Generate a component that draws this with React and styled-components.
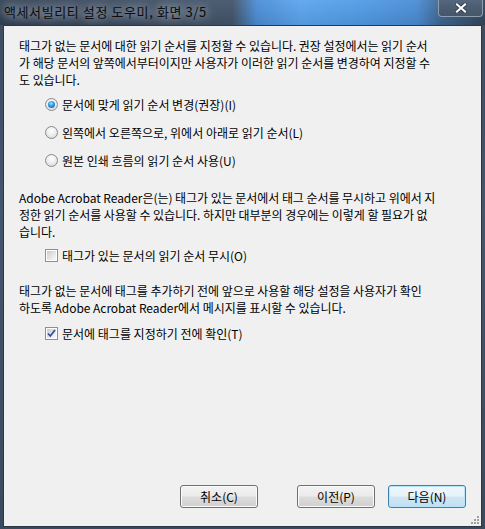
import styled, { createGlobalStyle } from "styled-components";

const GlobalStyle = createGlobalStyle`
  html, body {
    margin: 0;
    padding: 0;
    background: #fff;
  }
  body {
    font-family: "Noto Sans CJK KR", "Noto Sans", sans-serif;
    font-size: 12px;
    color: #000;
  }
`;

const Window = styled.div`
  width: 485px;
  height: 529px;
  display: flex;
  flex-direction: column;
  background: linear-gradient(180deg, #3c4d62 0%, #44566c 40%, #3a4a5e 100%);
  box-sizing: border-box;
  padding: 0 3px 2px 3px;
`;

const TitleBar = styled.div`
  height: 25px;
  margin: 0 -3px;
  display: flex;
  align-items: flex-start;
  justify-content: space-between;
  background:
    linear-gradient(180deg, rgba(255, 255, 255, 0.06) 0%, rgba(0, 0, 0, 0.08) 100%),
    linear-gradient(90deg, #2f3f53 0%, #3b4b60 30%, #43556b 48%, #4b8ed6 53%, #5ba5ee 62%, #4f9be6 75%, #4a8cd4 86%, #3e6690 91%, #33465c 100%);
`;

const Title = styled.span`
  padding: 4px 0 0 4px;
  font-size: 13px;
  line-height: 16px;
  letter-spacing: 0.6px;
  color: #0c0c0c;
  text-shadow: 0 0 10px rgba(230, 236, 244, 0.85), 0 0 14px rgba(230, 236, 244, 0.6);
`;

const CloseButton = styled.div`
  width: 45px;
  height: 17px;
  margin-right: 2px;
  box-sizing: border-box;
  border: 1px solid #8e9db0;
  border-top: none;
  border-radius: 0 0 4px 4px;
  background: linear-gradient(180deg, #55677d 0%, #4c5d72 50%, #45556a 100%);
  display: flex;
  align-items: center;
  justify-content: center;
`;

const Client = styled.div`
  flex: 1;
  position: relative;
  display: flex;
  flex-direction: column;
  background: #f0f0f0;
  border: 1px solid #2b3646;
  padding: 11px 15px 18px 15px;
`;

const Para = styled.p`
  margin: ${({ $top }) => $top || 0}px 0 0 0;
  line-height: 17px;
  white-space: nowrap;
  letter-spacing: -0.05px;
`;

const Option = styled.label`
  display: flex;
  align-items: center;
  gap: 4px;
  height: 28px;
  margin: ${({ $top }) => $top || 0}px 0 0 26px;
  line-height: 17px;
`;

const Radio = styled.span`
  width: 13px;
  height: 13px;
  box-sizing: border-box;
  border-radius: 50%;
  border: 1px solid #8a8a8a;
  background: radial-gradient(circle at 50% 35%, #ffffff 0%, #eeeeee 45%, #d2d2d2 100%);
  display: flex;
  align-items: center;
  justify-content: center;
  &::after {
    content: "";
    display: ${({ $checked }) => ($checked ? "block" : "none")};
    width: 7px;
    height: 7px;
    border-radius: 50%;
    background: radial-gradient(circle at 45% 35%, #9fe0ff 0%, #2a9ae6 45%, #114f86 100%);
  }
`;

const Check = styled.span`
  width: 13px;
  height: 13px;
  box-sizing: border-box;
  border: 1px solid #8e8f8f;
  background: #fff;
  padding: 1px;
  display: flex;
  &::before {
    content: "";
    flex: 1;
    background: linear-gradient(135deg, #cbcbcb 0%, #e6e6e6 55%, #fafafa 100%);
  }
`;

const CheckWrap = styled.span`
  position: relative;
  display: flex;
`;

const CheckMark = styled.svg`
  position: absolute;
  left: 1px;
  top: 1px;
`;

const CheckBox = ({ checked }) => (
  <CheckWrap>
    <Check />
    {checked && (
      <CheckMark width="11" height="11" viewBox="0 0 11 11">
        <path d="M2 5.5 L4.3 8 L9 2" fill="none" stroke="#2b4f9e" strokeWidth="1.7" />
      </CheckMark>
    )}
  </CheckWrap>
);

const Footer = styled.div`
  margin-top: auto;
  display: flex;
  justify-content: flex-end;
  align-items: center;
`;

const Button = styled.button`
  width: 78px;
  height: 23px;
  margin-left: ${({ $gap }) => $gap}px;
  padding: 0;
  box-sizing: border-box;
  font-family: "Noto Sans CJK KR", "Noto Sans", sans-serif;
  font-size: 12px;
  line-height: 1;
  color: #000;
  border: 1px solid ${({ $default }) => ($default ? "#3c7fb1" : "#707070")};
  border-radius: 3px;
  box-shadow: inset 0 0 0 1px ${({ $default }) => ($default ? "#b6e6fb" : "#fbfbfb")};
  background: ${({ $default }) =>
    $default
      ? "linear-gradient(180deg, #eef8fd 0%, #e6f3fb 48%, #cfe6f4 52%, #c3dff1 100%)"
      : "linear-gradient(180deg, #f2f2f2 0%, #ebebeb 48%, #dddddd 52%, #cfcfcf 100%)"};
`;

const Grip = styled.svg`
  position: absolute;
  right: 1px;
  bottom: 1px;
`;

export default function App() {
  return (
    <>
      <GlobalStyle />
      <Window>
        <TitleBar>
          <Title>액세서빌리티 설정 도우미, 화면 3/5</Title>
          <CloseButton>
            <svg width="12" height="10" viewBox="0 0 12 10">
              <path d="M2 1.5 L10 8.5 M10 1.5 L2 8.5" stroke="#26323f" strokeWidth="3.6" strokeLinecap="square" />
              <path d="M2 1.5 L10 8.5 M10 1.5 L2 8.5" stroke="#ffffff" strokeWidth="2.2" strokeLinecap="square" />
            </svg>
          </CloseButton>
        </TitleBar>
        <Client>
          <Para>
            태그가 없는 문서에 대한 읽기 순서를 지정할 수 있습니다. 권장 설정에서는 읽기 순서
            <br />
            가 해당 문서의 앞쪽에서부터이지만 사용자가 이러한 읽기 순서를 변경하여 지정할 수
            <br />
            도 있습니다.
          </Para>
          <Option $top={2}>
            <Radio $checked />
            문서에 맞게 읽기 순서 변경(권장)(I)
          </Option>
          <Option>
            <Radio />
            왼쪽에서 오른쪽으로, 위에서 아래로 읽기 순서(L)
          </Option>
          <Option>
            <Radio />
            원본 인쇄 흐름의 읽기 순서 사용(U)
          </Option>
          <Para $top={15}>
            Adobe Acrobat Reader은(는) 태그가 있는 문서에서 태그 순서를 무시하고 위에서 지
            <br />
            정한 읽기 순서를 사용할 수 있습니다. 하지만 대부분의 경우에는 이렇게 할 필요가 없
            <br />
            습니다.
          </Para>
          <Option $top={1}>
            <CheckBox />
            태그가 있는 문서의 읽기 순서 무시(O)
          </Option>
          <Para $top={13}>
            태그가 없는 문서에 태그를 추가하기 전에 앞으로 사용할 해당 설정을 사용자가 확인
            <br />
            하도록 Adobe Acrobat Reader에서 메시지를 표시할 수 있습니다.
          </Para>
          <Option $top={3}>
            <CheckBox checked />
            문서에 태그를 지정하기 전에 확인(T)
          </Option>
          <Footer>
            <Button>취소(C)</Button>
            <Button $gap={39}>이전(P)</Button>
            <Button $gap={13} $default>
              다음(N)
            </Button>
          </Footer>
          <Grip width="10" height="10" viewBox="0 0 10 10">
            <g fill="#a0a0a0">
              <rect x="7" y="1" width="2" height="2" />
              <rect x="4" y="4" width="2" height="2" />
              <rect x="7" y="4" width="2" height="2" />
              <rect x="1" y="7" width="2" height="2" />
              <rect x="4" y="7" width="2" height="2" />
              <rect x="7" y="7" width="2" height="2" />
            </g>
          </Grip>
        </Client>
      </Window>
    </>
  );
}
